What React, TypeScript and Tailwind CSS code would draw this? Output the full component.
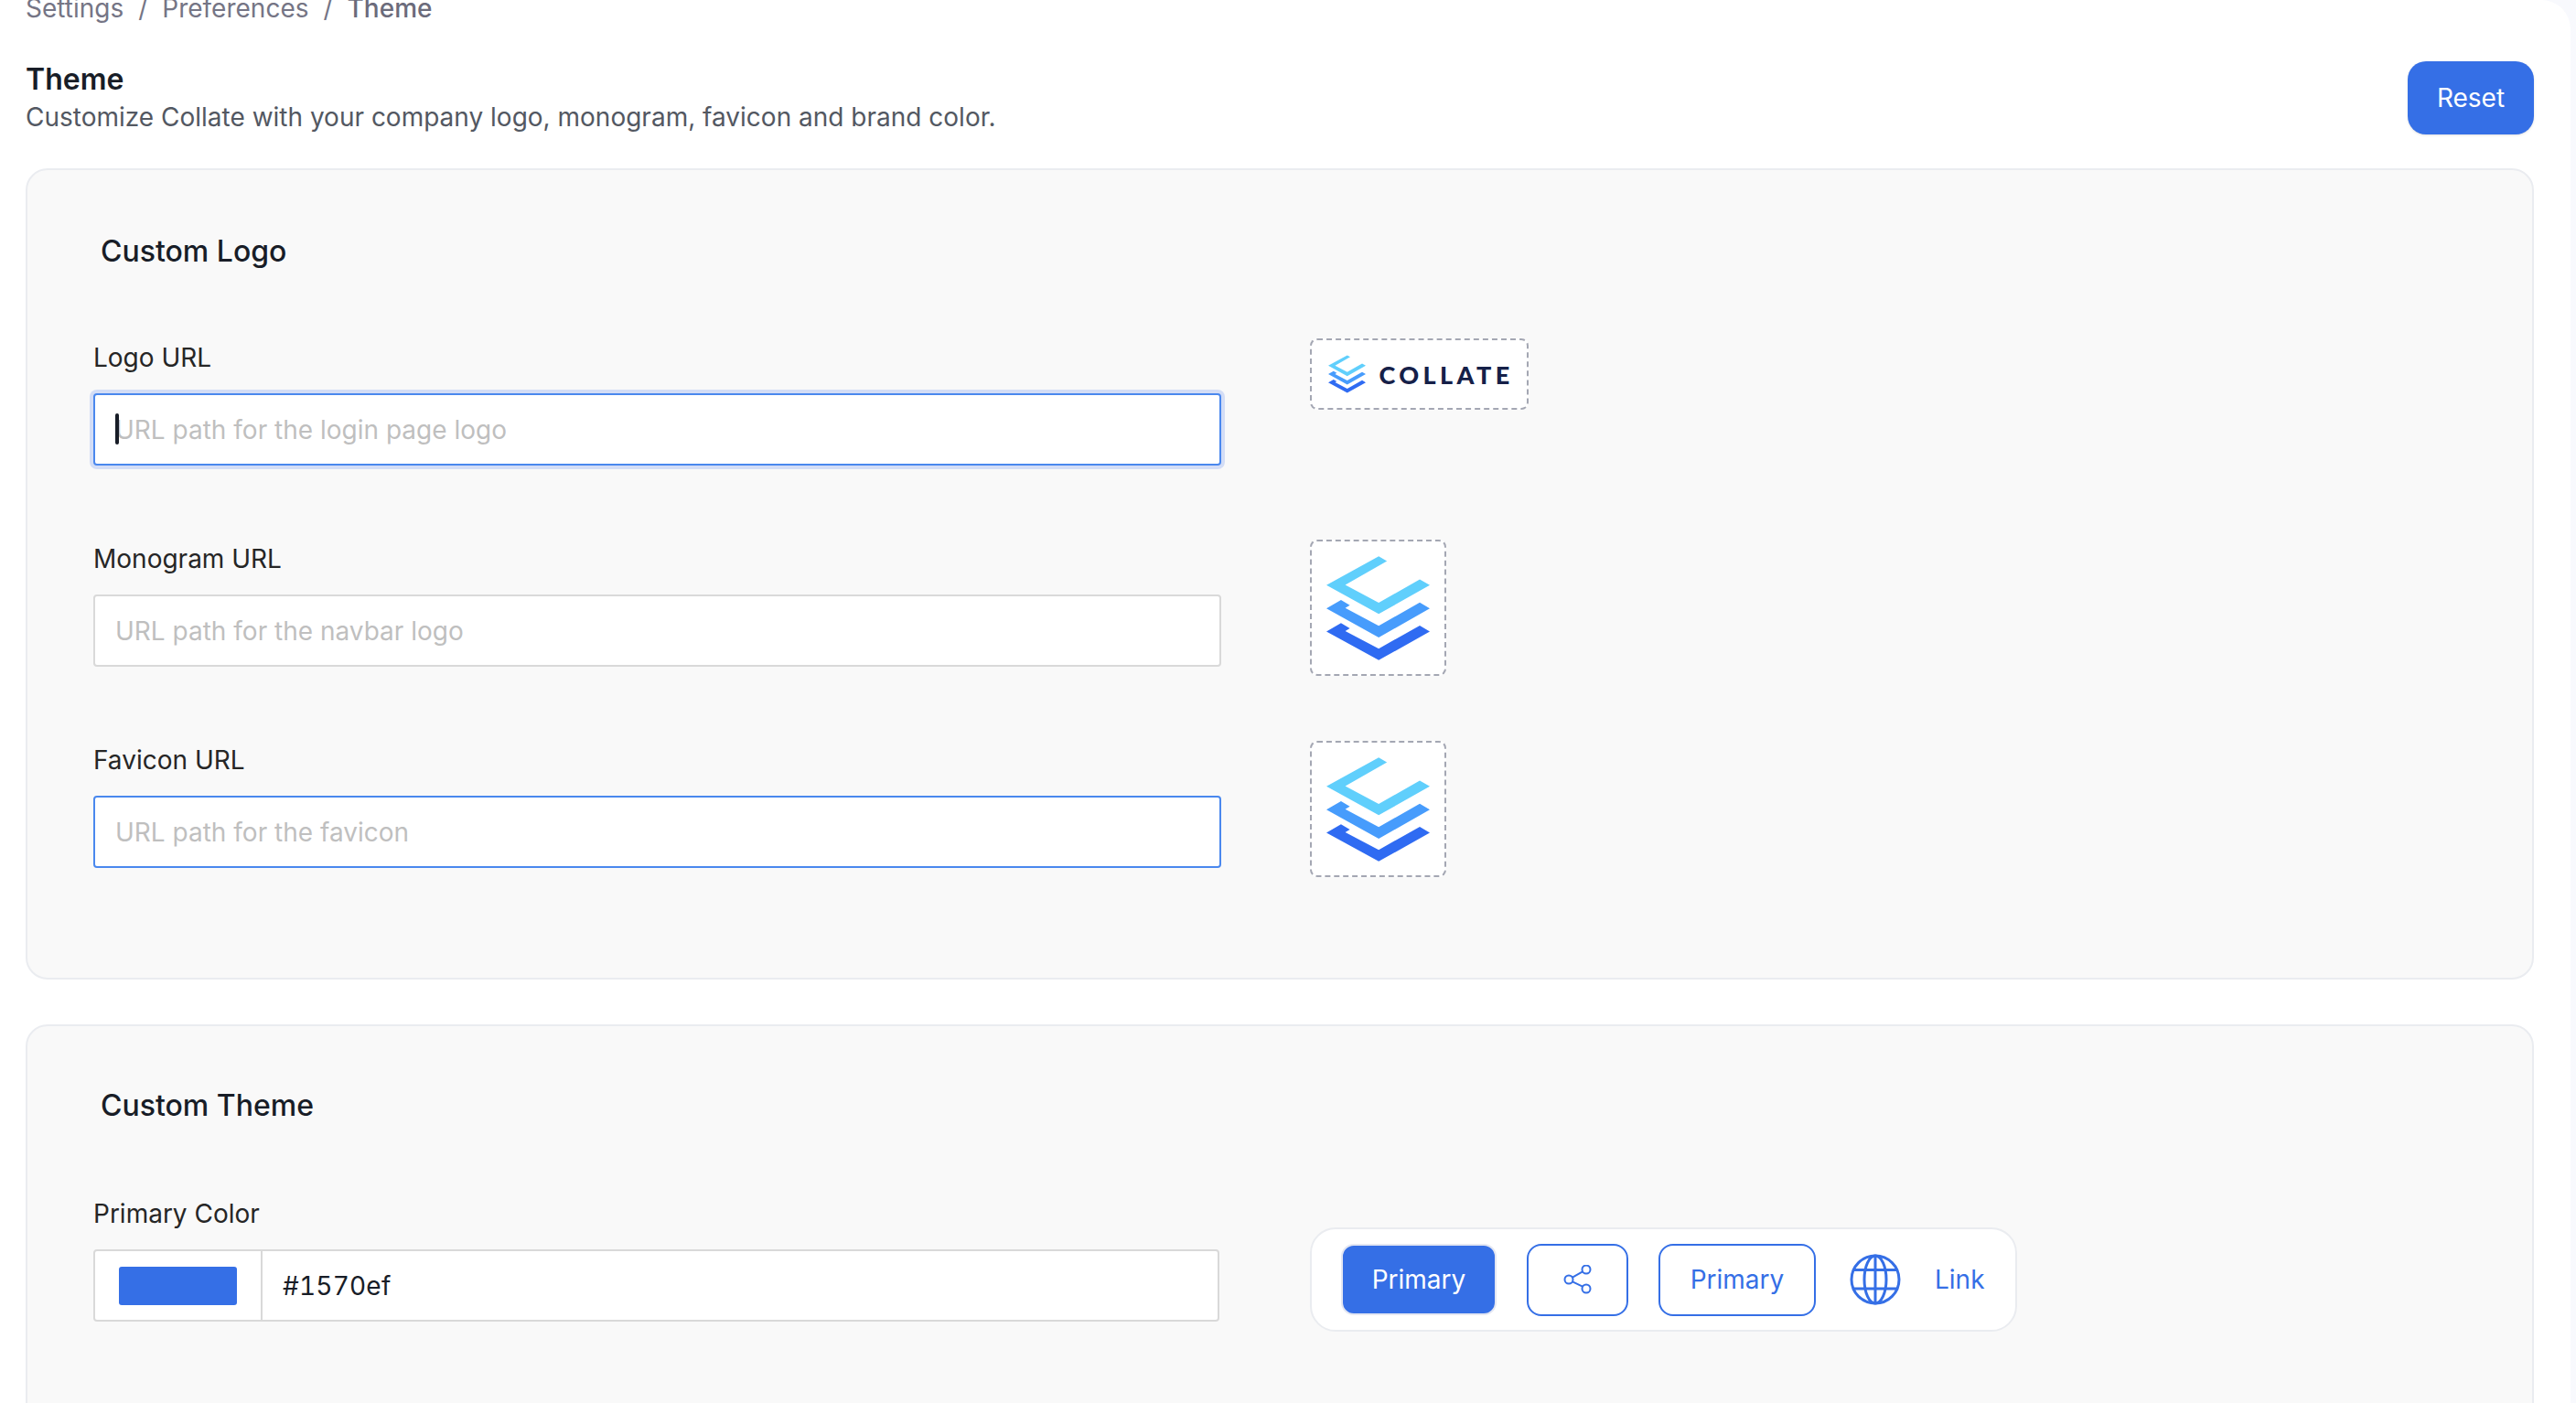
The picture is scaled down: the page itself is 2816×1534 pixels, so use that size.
import React from "react";

function Mark({ className }: { className: string }) {
  return (
    <svg viewBox="118 113 340 342" className={className}>
      <polygon fill="#60cffc" points="290,113 317,129 180,207 290,266 425,189 458,208 290,303 118,208" />
      <polygon fill="#479cfc" points="166,257 195,274 180,283 290,342 425,265 458,285 290,380 118,285" />
      <polygon fill="#2f6bf2" points="166,333 195,350 180,359 290,417 425,341 458,361 290,455 118,361" />
    </svg>
  );
}

function UrlField({
  label,
  placeholder,
  state,
}: {
  label: string;
  placeholder: string;
  state?: "focus" | "active";
}) {
  const cls =
    state === "focus"
      ? "border-[#4a88ee] shadow-[0_0_0_4px_#d3ddf6]"
      : state === "active"
        ? "border-[#4a88ee]"
        : "border-[#d9d9d9]";
  return (
    <div className="w-[1233px] shrink-0">
      <div className="text-[28px] leading-[40px] text-[#262626]">{label}</div>
      <div className="relative mt-[19px]">
        <input
          readOnly
          placeholder={placeholder}
          className={`block h-[79px] w-full rounded-[4px] border-2 bg-white px-[22px] text-[28px] caret-transparent outline-none placeholder:text-[#bfbfbf] ${cls}`}
        />
        {state === "focus" && (
          <span className="absolute left-[24px] top-[22px] h-[34px] w-[4px] rounded-[2px] bg-[#181d27]" />
        )}
      </div>
    </div>
  );
}

function Monogram() {
  return (
    <div className="-mt-[1px] flex h-[149px] w-[149px] items-center justify-center rounded-[8px] border-2 border-dashed border-[#a4a7b3] bg-white">
      <Mark className="h-[114px] w-[113px]" />
    </div>
  );
}

export default function App() {
  return (
    <div className="h-screen overflow-hidden bg-[#f8f9fd] pr-[6px] font-['Inter',sans-serif]">
      <div className="flow-root h-full rounded-tr-[32px] bg-white pl-[28px] pr-[40px]">
        <div className="-mt-[11px] flex items-center gap-[16px] text-[28px] leading-[40px] text-[#757585]">
          <span>Settings</span>
          <span>/</span>
          <span>Preferences</span>
          <span>/</span>
          <span className="font-medium text-[#6b6b7b]">Theme</span>
        </div>

        <div className="mt-[38px] flex items-start justify-between">
          <div>
            <h1 className="text-[32px] font-semibold leading-[40px] text-[#181d27]">Theme</h1>
            <p className="mt-[1px] text-[28px] leading-[40px] text-[#535862]">
              Customize Collate with your company logo, monogram, favicon and brand color.
            </p>
          </div>
          <button className="h-[80px] w-[138px] rounded-[20px] bg-[#356fe6] text-[28px] text-white shadow-sm">
            Reset
          </button>
        </div>

        <section className="mt-[36px] rounded-[24px] border-2 border-[#eaecf0] bg-[#f9f9f9] pb-[109px] pl-[72px] pt-[69px]">
          <h2 className="pl-[8px] text-[32px] font-medium leading-[40px] text-[#181d27]">Custom Logo</h2>
          <div className="mt-[76px] flex flex-col gap-[71px]">
            <div className="flex h-[149px] items-start gap-[97px]">
              <UrlField label="Logo URL" placeholder="URL path for the login page logo" state="focus" />
              <div className="-mt-[1px] flex h-[78px] w-[239px] items-center justify-center gap-[14px] rounded-[8px] border-2 border-dashed border-[#a4a7b3] bg-white">
                <Mark className="h-[42px] w-[41px]" />
                <span className="-mr-[4px] font-['Lato',sans-serif] text-[27px] font-black leading-none tracking-[4.4px] text-[#152048]">
                  COLLATE
                </span>
              </div>
            </div>
            <div className="flex h-[149px] items-start gap-[97px]">
              <UrlField label="Monogram URL" placeholder="URL path for the navbar logo" />
              <Monogram />
            </div>
            <div className="flex h-[149px] items-start gap-[97px]">
              <UrlField label="Favicon URL" placeholder="URL path for the favicon" state="active" />
              <Monogram />
            </div>
          </div>
        </section>

        <section className="mt-[49px] rounded-[24px] border-2 border-[#eaecf0] bg-[#f9f9f9] pb-[109px] pl-[72px] pt-[67px]">
          <h2 className="pl-[8px] text-[32px] font-medium leading-[40px] text-[#181d27]">Custom Theme</h2>
          <div className="mt-[78px] flex items-start gap-[99px]">
            <div className="w-[1231px] shrink-0">
              <div className="text-[28px] leading-[40px] text-[#262626]">Primary Color</div>
              <div className="mt-[19px] flex h-[79px] items-stretch rounded-[4px] border-2 border-[#d9d9d9] bg-white">
                <div className="flex w-[183px] items-center border-r-2 border-[#d9d9d9] pl-[26px]">
                  <span className="h-[42px] w-[129px] rounded-[3px] bg-[#356fe6]" />
                </div>
                <div className="flex flex-1 items-center pl-[22px] pt-[1px] text-[28px] tracking-[0.2px] tabular-nums text-[#181d27]">
                  #1570ef
                </div>
              </div>
            </div>
            <div className="mt-[35px] flex h-[114px] w-[773px] items-center rounded-[28px] border-2 border-[#eaecf0] bg-white pl-[32px]">
              <button className="h-[78px] w-[170px] rounded-[14px] border-2 border-[#e4e7f2] bg-[#356fe6] text-[28px] text-white">
                Primary
              </button>
              <button className="ml-[33px] flex h-[79px] w-[111px] items-center justify-center rounded-[16px] border-2 border-[#356fe6] bg-white">
                <svg viewBox="0 0 32 32" className="h-[32px] w-[32px]" fill="none" stroke="#356fe6" strokeWidth="2">
                  <circle cx="6" cy="16" r="4.5" />
                  <circle cx="25" cy="5" r="4.5" />
                  <circle cx="25" cy="26" r="4.5" />
                  <path d="M10 13.6 21 7.4M10 18.4 21 23.6" />
                </svg>
              </button>
              <button className="ml-[33px] h-[79px] w-[172px] rounded-[16px] border-2 border-[#356fe6] bg-white text-[28px] text-[#356fe6]">
                Primary
              </button>
              <svg viewBox="0 0 56 56" className="ml-[37px] h-[56px] w-[56px]" fill="none" stroke="#356fe6" strokeWidth="3">
                <circle cx="28" cy="28" r="26" />
                <ellipse cx="28" cy="28" rx="12" ry="26" />
                <path d="M28 2v52M5 17.5h46M5 38h46" />
              </svg>
              <span className="ml-[37px] text-[28px] text-[#356fe6]">Link</span>
            </div>
          </div>
        </section>
      </div>
    </div>
  );
}
